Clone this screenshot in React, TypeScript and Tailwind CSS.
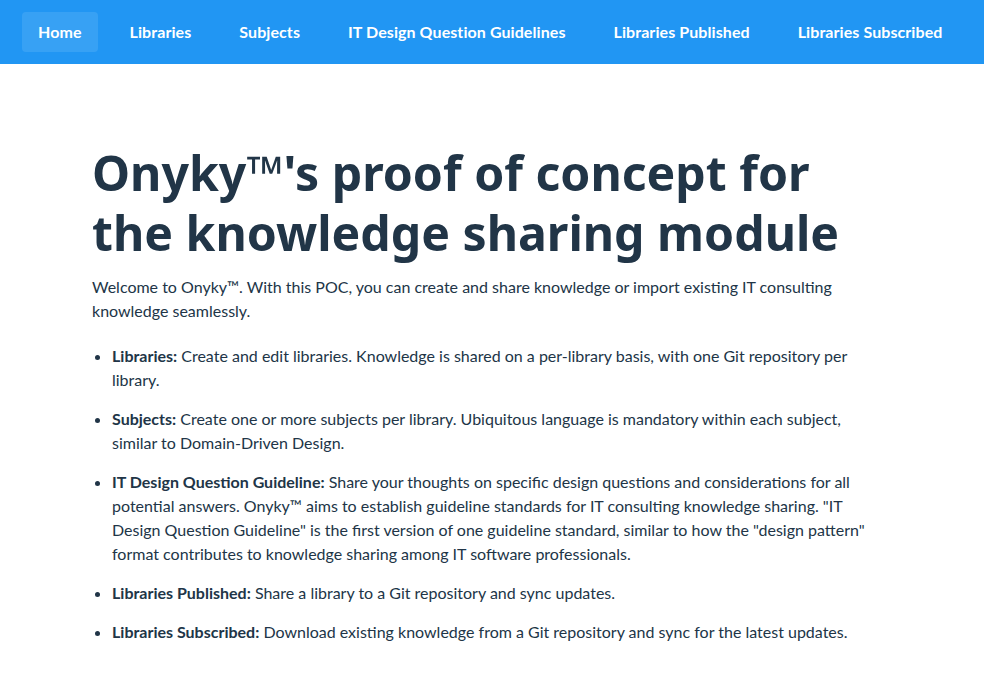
const navItems = [
  "Home",
  "Libraries",
  "Subjects",
  "IT Design Question Guidelines",
  "Libraries Published",
  "Libraries Subscribed",
];

const features = [
  {
    title: "Libraries:",
    text: "Create and edit libraries. Knowledge is shared on a per-library basis, with one Git repository per library.",
  },
  {
    title: "Subjects:",
    text: "Create one or more subjects per library. Ubiquitous language is mandatory within each subject, similar to Domain-Driven Design.",
  },
  {
    title: "IT Design Question Guideline:",
    text: 'Share your thoughts on specific design questions and considerations for all potential answers. Onyky™ aims to establish guideline standards for IT consulting knowledge sharing. "IT Design Question Guideline" is the first version of one guideline standard, similar to how the "design pattern" format contributes to knowledge sharing among IT software professionals.',
  },
  {
    title: "Libraries Published:",
    text: "Share a library to a Git repository and sync updates.",
  },
  {
    title: "Libraries Subscribed:",
    text: "Download existing knowledge from a Git repository and sync for the latest updates.",
  },
];

export default function App() {
  return (
    <div className="min-h-screen bg-white font-['Lato',sans-serif] text-[#213547]">
      <nav className="bg-[#2196f3] flex items-center gap-4 px-[22px] py-3">
        {navItems.map((item, i) => (
          <a
            key={item}
            href="#"
            className={`shrink-0 whitespace-nowrap px-4 py-2 rounded text-white font-bold text-base leading-6 tracking-[0.08px] ${i === 0 ? "bg-white/10" : ""}`}
          >
            {item}
          </a>
        ))}
      </nav>

      <main className="max-w-[800px] mx-auto pt-[78px]">
        <h1 className="font-['Noto_Sans',sans-serif] font-bold text-[48.2px] leading-[60px] text-[#213547]">
          Onyky™'s proof of concept for the knowledge sharing module
        </h1>
        <p className="mt-[13px] text-base leading-6">
          Welcome to Onyky™. With this POC, you can create and share knowledge or import existing IT consulting knowledge seamlessly.
        </p>
        <ul className="mt-[21px] list-disc pl-5 pr-4 space-y-[15px] text-base leading-6">
          {features.map((f) => (
            <li key={f.title}>
              <strong className="font-bold">{f.title}</strong> {f.text}
            </li>
          ))}
        </ul>
      </main>
    </div>
  );
}
